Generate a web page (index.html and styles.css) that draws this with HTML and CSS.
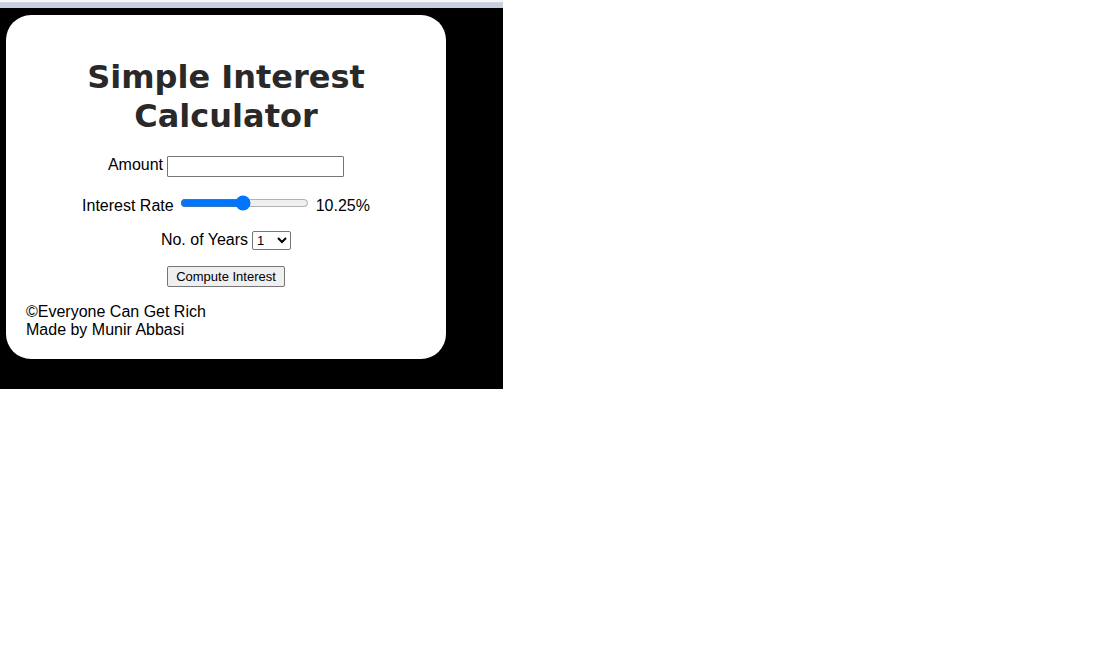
FILE: index.html
```html
<!DOCTYPE html>
<html lang="en">
<head>
<meta charset="utf-8">
<title>Simple Interest Calculator</title>
<link rel="stylesheet" href="styles.css">
</head>
<body>
<div class="strip"></div>
<div class="page">
  <main class="card">
    <h1 class="title">Simple Interest Calculator</h1>
    <form class="form">
      <div class="row row-amount">
        <label for="amount">Amount</label>
        <input class="amount" type="text" id="amount">
      </div>
      <div class="row row-rate">
        <label for="rate">Interest Rate</label>
        <input class="rate" type="range" id="rate" min="1" max="20" step="0.25" value="10.25">
        <output class="rate-value" for="rate">10.25%</output>
      </div>
      <div class="row row-years">
        <label for="years">No. of Years</label>
        <select class="years" id="years">
          <option>1</option><option>2</option><option>3</option><option>4</option><option>5</option>
          <option>6</option><option>7</option><option>8</option><option>9</option><option>10</option>
        </select>
      </div>
      <button class="compute" type="button">Compute Interest</button>
    </form>
    <footer class="footer">©Everyone Can Get Rich<br>Made by Munir Abbasi</footer>
  </main>
</div>
</body>
</html>
```
FILE: styles.css
```css
* {
  box-sizing: border-box;
}

body {
  margin: 0;
  background: #fff;
  color: #000;
  font: 16px/18px "Liberation Sans", Arial, sans-serif;
}

.strip {
  max-width: 503px;
  height: 8px;
  border-top: 2px solid #f3f5f9;
  background: linear-gradient(#d3d5db 1px, #c5cfdf 1px);
}

.page {
  max-width: 503px;
  padding: 7px 57px 30px 6px;
  background: #000;
}

.card {
  padding: 43px 20px 20px;
  border-radius: 25px;
  background: #fff;
}

.title {
  margin: 0 0 20px;
  color: #292929;
  font: bold 32px/39px "DejaVu Sans", Verdana, sans-serif;
  text-align: center;
}

.form {
  display: flex;
  flex-direction: column;
  align-items: center;
}

.row {
  display: flex;
  align-items: flex-start;
  gap: 4px;
}

.row-amount {
  margin-bottom: 18px;
}

.row-rate {
  align-items: flex-end;
  margin-bottom: 16px;
}

.row-years {
  margin-bottom: 16px;
}

.amount {
  width: 177px;
  height: 21px;
  border: 1px solid #767676;
  border-radius: 1px;
  font: 13px "Liberation Sans", Arial, sans-serif;
}

.rate {
  width: 129px;
  height: 16px;
  margin: 0 3px 4px 2px;
}

.years {
  width: 39px;
  height: 19px;
  border: 1px solid #767676;
  border-radius: 2px;
  background-color: #fff;
  color: #000;
  font: 13px "Liberation Sans", Arial, sans-serif;
}

.compute {
  width: 118px;
  height: 21px;
  margin-bottom: 16px;
  padding: 0;
  border: 1px solid #767676;
  border-radius: 2px;
  background: #efefef;
  color: #000;
  font: 13px "Liberation Sans", Arial, sans-serif;
}
```
